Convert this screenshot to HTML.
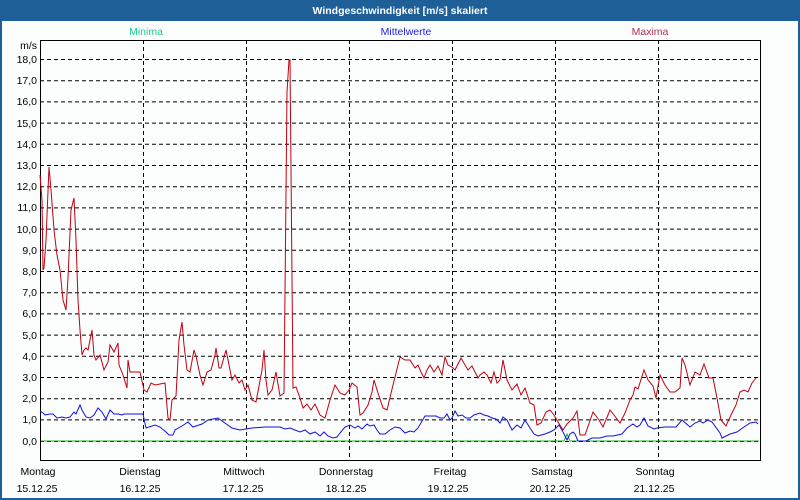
<!DOCTYPE html>
<html><head><meta charset="utf-8"><style>
html,body{margin:0;padding:0;width:800px;height:500px;overflow:hidden;background:#1f5f97}
svg{display:block}
text{font-family:"Liberation Sans",sans-serif;font-size:10.5px}
</style></head><body>
<svg width="800" height="500" viewBox="0 0 800 500">
<rect x="0" y="0" width="800" height="500" fill="#1f5f97"/>
<rect x="2" y="21" width="796" height="477" fill="#fcfefe"/>
<text x="400" y="14" text-anchor="middle" fill="#fff" font-weight="bold" font-size="11">Windgeschwindigkeit [m/s] skaliert</text>
<text x="146" y="35" text-anchor="middle" fill="#20c890">Minima</text>
<text x="406" y="35" text-anchor="middle" fill="#2020e0">Mittelwerte</text>
<text x="650" y="35" text-anchor="middle" fill="#b0305a">Maxima</text>
<text x="37" y="49" text-anchor="end" fill="#000">m/s</text>
<g stroke="#000" stroke-width="1" stroke-dasharray="4,3" fill="none">
<path d="M40 59.5H760M40 80.7H760M40 101.9H760M40 123.1H760M40 144.3H760M40 165.5H760M40 186.7H760M40 207.9H760M40 229.1H760M40 250.3H760M40 271.5H760M40 292.7H760M40 313.9H760M40 335.1H760M40 356.3H760M40 377.5H760M40 398.7H760M40 419.9H760"/>
<path d="M143.5 40V461M246.5 40V461M349.5 40V461M452.5 40V461M555.5 40V461M658.5 40V461"/>
</g>
<path d="M40 441.5H760" stroke="#000" stroke-dasharray="4,3"/>
<rect x="40.5" y="40.5" width="720" height="420" fill="none" stroke="#000"/>
<g fill="#000" text-anchor="end">
<text x="37" y="63">18,0</text><text x="37" y="84">17,0</text><text x="37" y="105">16,0</text><text x="37" y="127">15,0</text><text x="37" y="148">14,0</text><text x="37" y="169">13,0</text><text x="37" y="190">12,0</text><text x="37" y="211">11,0</text><text x="37" y="233">10,0</text><text x="37" y="254">9,0</text><text x="37" y="275">8,0</text><text x="37" y="296">7,0</text><text x="37" y="317">6,0</text><text x="37" y="339">5,0</text><text x="37" y="360">4,0</text><text x="37" y="381">3,0</text><text x="37" y="402">2,0</text><text x="37" y="423">1,0</text><text x="37" y="445">0,0</text>
</g>
<g fill="#000" text-anchor="middle">
<text x="38" y="475">Montag</text><text x="140" y="475">Dienstag</text><text x="244" y="475">Mittwoch</text><text x="346" y="475">Donnerstag</text><text x="450" y="475">Freitag</text><text x="552" y="475">Samstag</text><text x="655" y="475">Sonntag</text>
<text x="37" y="492">15.12.25</text><text x="140" y="492">16.12.25</text><text x="243" y="492">17.12.25</text><text x="346" y="492">18.12.25</text><text x="448" y="492">19.12.25</text><text x="550" y="492">20.12.25</text><text x="654" y="492">21.12.25</text>
</g>
<polyline fill="none" stroke="#20b020" stroke-width="1" points="41,441 564,441 567,434 570,441 759,441"/>
<polyline fill="none" stroke="#1010e0" stroke-width="1" points="40,411 43,413 45,415 50,414 53,414 57,418 62,417 66,418 70,417 74,412 76,414 80,405 82,410 86,417 90,418 94,415 98,408 102,412 106,419 110,410 114,414 118,414 122,415 124,414 143,414 146,428 155,425 160,427 166,432 169,435 173,435 175,430 182,426 188,422 193,427 202,424 208,420 213,419 218,418 222,421 232,428 240,430 252,428 265,427 274,427 280,427 285,429 290,428 295,430 300,432 305,430 310,434 315,432 320,436 324,432 328,436 333,438 337,437 340,433 345,427 350,425 355,428 358,426 362,429 367,424 370,426 374,425 377,430 380,434 385,434 390,430 395,427 400,428 405,433 410,431 414,432 418,428 425,416 430,416 436,416 440,418 444,418 447,414 450,420 452,418 455,411 458,416 462,415 466,418 470,418 474,415 480,413 484,415 488,416 492,418 496,419 500,423 503,417 507,420 512,430 517,425 521,428 525,420 530,428 534,434 538,436 545,434 550,432 554,430 559,425 563,432 567,440 570,434 573,432 575,434 578,441 586,441 592,438 600,438 607,436 613,436 622,434 627,428 633,424 637,427 640,425 644,418 648,426 654,429 657,428 665,427 676,427 682,420 690,427 695,423 700,421 703,423 708,420 712,422 720,433 722,438 730,434 737,432 744,427 750,423 756,422 758,424"/>
<polyline fill="none" stroke="#c00010" stroke-width="1" points="40,175 42,200 43,270 44,268 46,240 49,167 51,190 54,230 57,255 60,270 63,300 66,310 68,278 71,210 74,198 76,240 78,300 80,330 82,355 84,350 86,348 88,350 90,340 92,330 94,355 96,360 100,355 104,370 108,362 110,345 114,352 118,343 119,365 123,375 127,388 128,360 130,372 133,372 140,372 144,390 147,392 151,383 155,385 160,384 165,383 168,418 170,420 172,400 176,396 179,340 182,322 184,345 187,370 190,372 194,350 196,356 200,375 203,385 207,372 211,370 215,355 216,348 219,368 221,368 226,350 232,380 235,375 239,383 242,380 245,390 248,385 252,400 256,402 262,370 264,350 266,380 268,395 272,390 276,372 280,396 284,393 287,92 289,60 290,60 293,388 296,387 300,398 303,408 307,404 311,410 315,404 320,415 325,418 330,400 335,385 340,393 345,395 349,390 352,383 357,387 360,415 363,413 368,405 372,392 374,380 378,393 383,408 387,410 393,385 400,357 405,360 410,360 415,368 418,365 421,372 424,378 427,370 430,365 434,372 438,366 442,375 445,357 448,365 452,367 455,370 461,358 468,370 472,366 478,378 480,375 484,372 487,375 491,383 494,372 497,383 500,380 503,360 507,380 512,390 517,384 521,395 525,388 530,403 534,405 537,425 541,423 546,412 550,410 554,415 558,422 563,430 567,424 573,418 577,411 580,435 585,435 593,412 599,420 603,427 610,410 614,415 620,423 625,413 630,400 633,395 635,387 638,389 644,370 648,380 653,386 656,398 660,375 665,385 670,392 675,392 680,388 682,358 685,365 690,385 695,372 700,375 704,364 709,378 713,378 717,398 721,420 726,426 731,415 736,405 740,392 744,390 748,392 752,383 756,378"/>
</svg>
</body></html>
